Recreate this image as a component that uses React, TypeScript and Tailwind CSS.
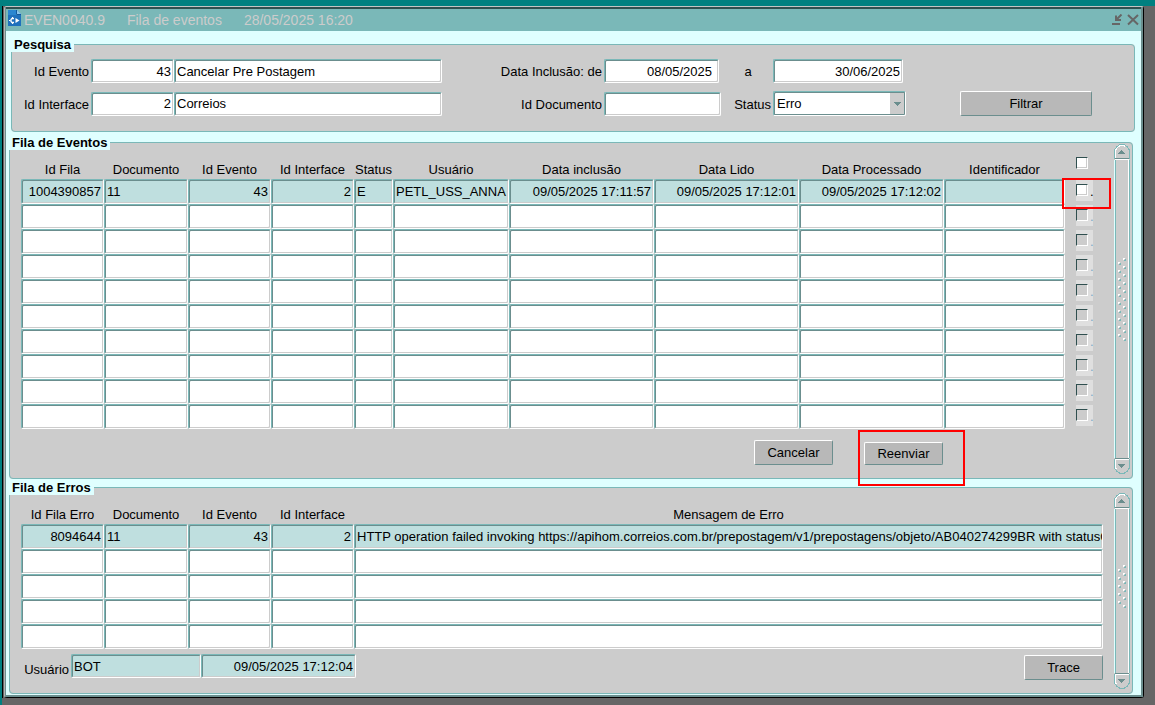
import React, { useState } from 'react';
import clsx from 'clsx';

interface Column {
  label: string;
  width: string;
  align?: 'right';
}

const EVENT_COLUMNS: Column[] = [
  { label: 'Id Fila', width: 'w-[83px]', align: 'right' },
  { label: 'Documento', width: 'w-[84px]' },
  { label: 'Id Evento', width: 'w-[83px]', align: 'right' },
  { label: 'Id Interface', width: 'w-[83px]', align: 'right' },
  { label: 'Status', width: 'w-[39px]' },
  { label: 'Usuário', width: 'w-[116px]' },
  { label: 'Data inclusão', width: 'w-[145px]', align: 'right' },
  { label: 'Data Lido', width: 'w-[145px]', align: 'right' },
  { label: 'Data Processado', width: 'w-[145px]', align: 'right' },
  { label: 'Identificador', width: 'w-auto' },
];

const ERROR_COLUMNS: Column[] = [
  { label: 'Id Fila Erro', width: 'w-[83px]', align: 'right' },
  { label: 'Documento', width: 'w-[84px]' },
  { label: 'Id Evento', width: 'w-[83px]', align: 'right' },
  { label: 'Id Interface', width: 'w-[83px]', align: 'right' },
  { label: 'Mensagem de Erro', width: 'w-auto' },
];

const EVENTS = [
  [
    '1004390857',
    '11',
    '43',
    '2',
    'E',
    'PETL_USS_ANNA',
    '09/05/2025 17:11:57',
    '09/05/2025 17:12:01',
    '09/05/2025 17:12:02',
    '',
  ],
];

const ERRORS = [
  [
    '8094644',
    '11',
    '43',
    '2',
    'HTTP operation failed invoking https://apihom.correios.com.br/prepostagem/v1/prepostagens/objeto/AB040274299BR with statusC',
  ],
];

interface FieldProps extends React.InputHTMLAttributes<HTMLInputElement> {
  filled?: boolean;
}

function Field({ filled, className, ...props }: FieldProps) {
  return (
    <input
      type="text"
      className={clsx(
        'block h-6 rounded-xs border border-t-[#7ab8b8] border-l-[#7ab8b8] border-r-white border-b-white pl-0.5 text-[13px] leading-4 text-black shadow-[inset_1px_1px_#6b8e8e,inset_-1px_-1px_#cccccc] outline-none',
        filled ? 'bg-[#bfdfdf]' : 'bg-white',
        className
      )}
      {...props}
    />
  );
}

function Button({ className, ...props }: React.ButtonHTMLAttributes<HTMLButtonElement>) {
  return (
    <button
      type="button"
      className={clsx(
        'rounded-xs border border-t-white border-l-white border-r-[#6b8e8e] border-b-[#6b8e8e] bg-[#b8b8b8] text-[13px] leading-4 text-black',
        className
      )}
      {...props}
    />
  );
}

function Check(props: React.InputHTMLAttributes<HTMLInputElement>) {
  return (
    <input
      type="checkbox"
      className="block size-3 shrink-0 appearance-none border border-t-[#2f4f4f] border-l-[#2f4f4f] border-r-white border-b-white bg-white shadow-[inset_-1px_-1px_#cccccc] checked:bg-[#2f4f4f] disabled:bg-[#cccccc]"
      {...props}
    />
  );
}

function Panel({ title, className, children }: { title: string; className?: string; children: React.ReactNode }) {
  return (
    <fieldset className={clsx('min-w-0 rounded-[4px] border border-[#7ab8b8] bg-[#cccccc]', className)}>
      <legend className="-ml-px h-4 bg-[#dfffff] px-[3px] text-[13px] leading-[18px] font-bold">{title}</legend>
      {children}
    </fieldset>
  );
}

interface ScrollbarProps {
  dots: number;
  label: string;
  className?: string;
  trackClassName: string;
}

/* Vertical scrollbar with rounded caps and a dotted grip */
function Scrollbar({ dots, label, className, trackClassName }: ScrollbarProps) {
  return (
    <div className={clsx('flex w-4 shrink-0 flex-col', className)}>
      <button type="button" aria-label={`${label}: subir`} className="block">
        <svg width="16" height="16" viewBox="0 0 16 16" shapeRendering="crispEdges">
          <path d="M.5 15V6.5l1-2 1-1.5 2-1.5 2-1h3l2 1 2 1.5 1 1.5 1 2V15" fill="#ccc" stroke="#7ab8b8" />
          <path d="M1.5 14V6.5l1-2 2-2 2-1h3l2 1" fill="none" stroke="#fff" />
          <path d="M4 10h7v-1h-1v-1h-1v-1h-1v-1h-1v1h-1v1h-1v1h-1z" fill="#6b8e8e" />
          <path d="M1 14.5h14" stroke="#6b8e8e" />
          <path d="M1 15.5h14" stroke="#fff" />
        </svg>
      </button>
      <div
        className={clsx(
          'flex flex-1 items-center justify-center border-x border-l-[#dfffff] border-r-[#7ab8b8] bg-[#cccccc] shadow-[inset_1px_0_#7ab8b8,inset_-1px_0_#ffffff]',
          trackClassName
        )}
      >
        <svg width="9" height={dots * 8} shapeRendering="crispEdges">
          {Array.from({ length: dots }, (_, i) => (
            <g key={i}>
              <path d={`M5 ${i * 8 + 1}h2v1h-1v1h-1z`} fill="#fff" />
              <path d={`M7 ${i * 8 + 2}h1v2h-2v-1h1z`} fill="#7ab8b8" />
              {i < dots - 1 && (
                <>
                  <path d={`M0 ${i * 8 + 5}h2v1h-1v1h-1z`} fill="#fff" />
                  <path d={`M2 ${i * 8 + 6}h1v2h-2v-1h1z`} fill="#7ab8b8" />
                </>
              )}
            </g>
          ))}
        </svg>
      </div>
      <button type="button" aria-label={`${label}: descer`} className="block">
        <svg width="16" height="16" viewBox="0 0 16 16" shapeRendering="crispEdges">
          <path d="M.5 1v8.5l1 2 1 1.5 2 1.5 2 1h3l2-1 2-1.5 1-1.5 1-2V1" fill="#ccc" stroke="#7ab8b8" />
          <path d="M1.5 2v7.5l1 2" fill="none" stroke="#fff" />
          <path d="M1 .5h14" stroke="#6b8e8e" />
          <path d="M1 1.5h14" stroke="#fff" />
          <path d="M4 6h7v1h-1v1h-1v1h-1v1h-1v-1h-1v-1h-1v-1h-1z" fill="#6b8e8e" />
        </svg>
      </button>
    </div>
  );
}

interface GridProps {
  columns: Column[];
  data: string[][];
  rowCount: number;
  selectable?: boolean;
}

function Grid({ columns, data, rowCount, selectable }: GridProps) {
  return (
    <table className="w-full table-fixed border-collapse">
      <thead>
        <tr className="h-[29px]">
          {columns.map((col) => (
            <th key={col.label} scope="col" className={clsx('p-0 pb-px align-bottom leading-4 font-normal whitespace-nowrap', col.width)}>
              {col.label}
            </th>
          ))}
          {selectable && (
            <th className="w-[49px] p-0 pt-[7px] pl-[11px] align-top">
              <Check aria-label="Selecionar todos" />
            </th>
          )}
        </tr>
      </thead>
      <tbody>
        {Array.from({ length: rowCount }, (_, row) => (
          <tr key={row} className="h-[25px]">
            {columns.map((col, i) => (
              <td key={col.label} className="p-0">
                <Field
                  readOnly
                  filled={row < data.length}
                  aria-label={`${col.label} ${row + 1}`}
                  value={data[row]?.[i] ?? ''}
                  className={clsx('h-[25px] w-full', col.align === 'right' && 'pr-0.5 text-right')}
                />
              </td>
            ))}
            {selectable && (
              <td className="p-0 pt-px pl-[11px] align-top">
                <div className="relative flex h-[21px] w-[17px] items-start bg-[#dfdfdf] pt-1">
                  <Check disabled={row >= data.length} aria-label={`Selecionar linha ${row + 1}`} />
                  <span className={clsx('pl-0.5 leading-4', row < data.length ? 'text-black' : 'text-[#7aa8c8]')}>.</span>
                  {row === 0 && (
                    <span className="pointer-events-none absolute -top-0.5 -left-[14px] z-10 h-[31px] w-[49px] border-2 border-[#ff0000]" />
                  )}
                </div>
              </td>
            )}
          </tr>
        ))}
      </tbody>
    </table>
  );
}

function TitleBar() {
  return (
    <header className="flex h-[24px] items-center border-t-2 border-[#2f4f4f] bg-[#7ab8b8] pr-0.5 pl-0.5 text-[14px] leading-4 text-[#cccccc]">
      <svg width="14" height="17" viewBox="0 0 14 17" className="mb-1 shrink-0">
        <path d="M0 0h9l4 4v12H0z" fill="#2a86d0" />
        <path d="M0 5h13v11H0z" fill="#1f70bc" />
        <path d="M9 0l4 4v1H8V0z" fill="#8cc4ec" />
        <path d="M8.500 0v4.500H13" fill="none" stroke="#135a9c" />
        <path d="M4.500 7v1.500M4.500 12.500V14M1 10.500h1.500" stroke="#fff" />
        <path d="M6 8.500H4L3 9.500v2l1 1h2" fill="none" stroke="#fff" strokeWidth="1.300" />
        <path d="M7.500 8l4 2.500-4 2.500z" fill="#fff" />
      </svg>
      <h1 className="flex gap-[22px] pl-0.5 whitespace-nowrap">
        <span>EVEN0040.9</span>
        <span>Fila de eventos</span>
        <span>28/05/2025 16:20</span>
      </h1>
      <div className="ml-auto flex items-center gap-1 text-[#666666]">
        <button type="button" aria-label="Minimizar">
          <svg width="12" height="12" viewBox="0 0 12 12" className="block" fill="none" stroke="currentColor" strokeWidth="2">
            <path d="M10.500 .5L6 5M5 1.500V6h5M1 10h8" />
          </svg>
        </button>
        <button type="button" aria-label="Fechar">
          <svg width="12" height="12" viewBox="0 0 12 12" className="block" fill="none" stroke="currentColor" strokeWidth="2">
            <path d="M1 1l10 9.500M11 1L1 10.500" />
          </svg>
        </button>
      </div>
    </header>
  );
}

function SearchPanel() {
  const [status, setStatus] = useState('Erro');

  return (
    <Panel title="Pesquisa" className="-mr-0.5 ml-0.5">
      <div className="grid grid-cols-[79px_83px_268px_1fr_117px_52px_133px_54px_132px] items-center gap-y-2 pt-[7px] pr-[42px] pb-[15px]">
        <label htmlFor="id-evento" className="pt-0.5 pr-0.5 text-right">Id Evento</label>
        <Field id="id-evento" defaultValue="43" className="w-full pr-0.5 text-right" />
        <Field aria-label="Descrição do evento" defaultValue="Cancelar Pre Postagem" className="w-full" />
        <label htmlFor="data-de" className="pt-0.5 pr-0.5 text-right">Data Inclusão: de</label>
        <Field id="data-de" defaultValue="08/05/2025" className="w-[115px] pr-1.5 text-right" />
        <label htmlFor="data-ate" className="pt-0.5 pl-0.5 text-center">a</label>
        <Field id="data-ate" defaultValue="30/06/2025" className="w-[130px] pr-0.5 text-right" />
        <span className="col-span-2" />

        <label htmlFor="id-interface" className="pt-0.5 pr-0.5 text-right">Id Interface</label>
        <Field id="id-interface" defaultValue="2" className="w-full pr-0.5 text-right" />
        <Field aria-label="Descrição da interface" defaultValue="Correios" className="w-full" />
        <label htmlFor="id-documento" className="pt-0.5 pr-0.5 text-right">Id Documento</label>
        <Field id="id-documento" className="w-full" />
        <label htmlFor="status" className="pt-0.5 pr-0.5 text-right">Status</label>
        <div className="relative">
          <select
            id="status"
            value={status}
            onChange={(e) => setStatus(e.target.value)}
            className="block h-[25px] w-full appearance-none rounded-xs border border-t-[#7ab8b8] border-l-[#7ab8b8] border-r-white border-b-white bg-white pl-[3px] text-[13px] leading-4 text-black shadow-[inset_1px_1px_#6b8e8e,inset_-1px_-1px_#6b8e8e] outline-none"
          >
            <option>Erro</option>
          </select>
          <span className="pointer-events-none absolute top-0.5 right-0.5 bottom-0.5 flex w-3.5 items-center justify-center bg-[#cccccc]">
            <svg width="7" height="4" viewBox="0 0 7 4" shapeRendering="crispEdges">
              <path d="M0 0h7v1H6v1H5v1H4v1H3V3H2V2H1V1H0z" fill="#6b8e8e" />
            </svg>
          </span>
        </div>
        <span />
        <Button className="h-[25px]">Filtrar</Button>
      </div>
    </Panel>
  );
}

export default function App() {
  return (
    <div
      className="min-h-screen border-t-[6px] border-l-2 border-[#008080] bg-[#666666] text-[13px] leading-4 text-black"
      style={{ fontFamily: '"Liberation Sans", Arial, sans-serif' }}
    >
      <div className="mr-[11px] border-l border-black pl-px">
        <main className="rounded-[3px] border border-t-[#c4c4c4] border-r-black border-b-black border-l-[#b4b4b4] bg-[#dfffff]">
          <div className="border-r-2 border-b-2 border-l border-[#6b8e8e]">
            <TitleBar />
            <div className="flex flex-col pt-[5px] pr-2 pb-px pl-[3px]">
              <SearchPanel />

              <Panel title="Fila de Eventos" className="mt-0.5">
                <div className="flex pr-0.5 pl-[11px]">
                  <div className="min-w-0 flex-1">
                    <Grid columns={EVENT_COLUMNS} data={EVENTS} rowCount={10} selectable />
                    <div className="flex justify-end gap-[31px] pt-[11px] pr-[171px] pb-[13px]">
                      <Button className="h-[25px] w-[79px]">Cancelar</Button>
                      <div className="relative pt-0.5">
                        <Button className="block h-[23px] w-[79px]">Reenviar</Button>
                        <span className="pointer-events-none absolute -top-[10px] -right-[22px] -bottom-[21px] -left-[6px] z-10 border-2 border-[#ff0000]" />
                      </div>
                    </div>
                  </div>
                  <Scrollbar dots={11} label="Fila de Eventos" className="-mt-1.5 mb-1" trackClassName="pb-4" />
                </div>
              </Panel>

              <Panel title="Fila de Erros">
                <div className="flex pr-0.5 pl-[11px]">
                  <div className="min-w-0 flex-1 pr-[11px]">
                    <Grid columns={ERROR_COLUMNS} data={ERRORS} rowCount={5} />
                    <div className="flex items-start pt-[5px] pb-[13px]">
                      <label htmlFor="usuario" className="w-[50px] pt-2 pr-0.5 text-right">Usuário</label>
                      <Field id="usuario" filled readOnly value="BOT" className="w-[130px]" />
                      <Field filled readOnly aria-label="Data do erro" value="09/05/2025 17:12:04" className="w-[155px] pr-0.5 text-right" />
                      <Button className="mt-px ml-auto h-[25px] w-[79px]">Trace</Button>
                    </div>
                  </div>
                  <Scrollbar dots={6} label="Fila de Erros" className="-mt-0.5 mb-1" trackClassName="pb-1.5" />
                </div>
              </Panel>
            </div>
          </div>
        </main>
      </div>
    </div>
  );
}
